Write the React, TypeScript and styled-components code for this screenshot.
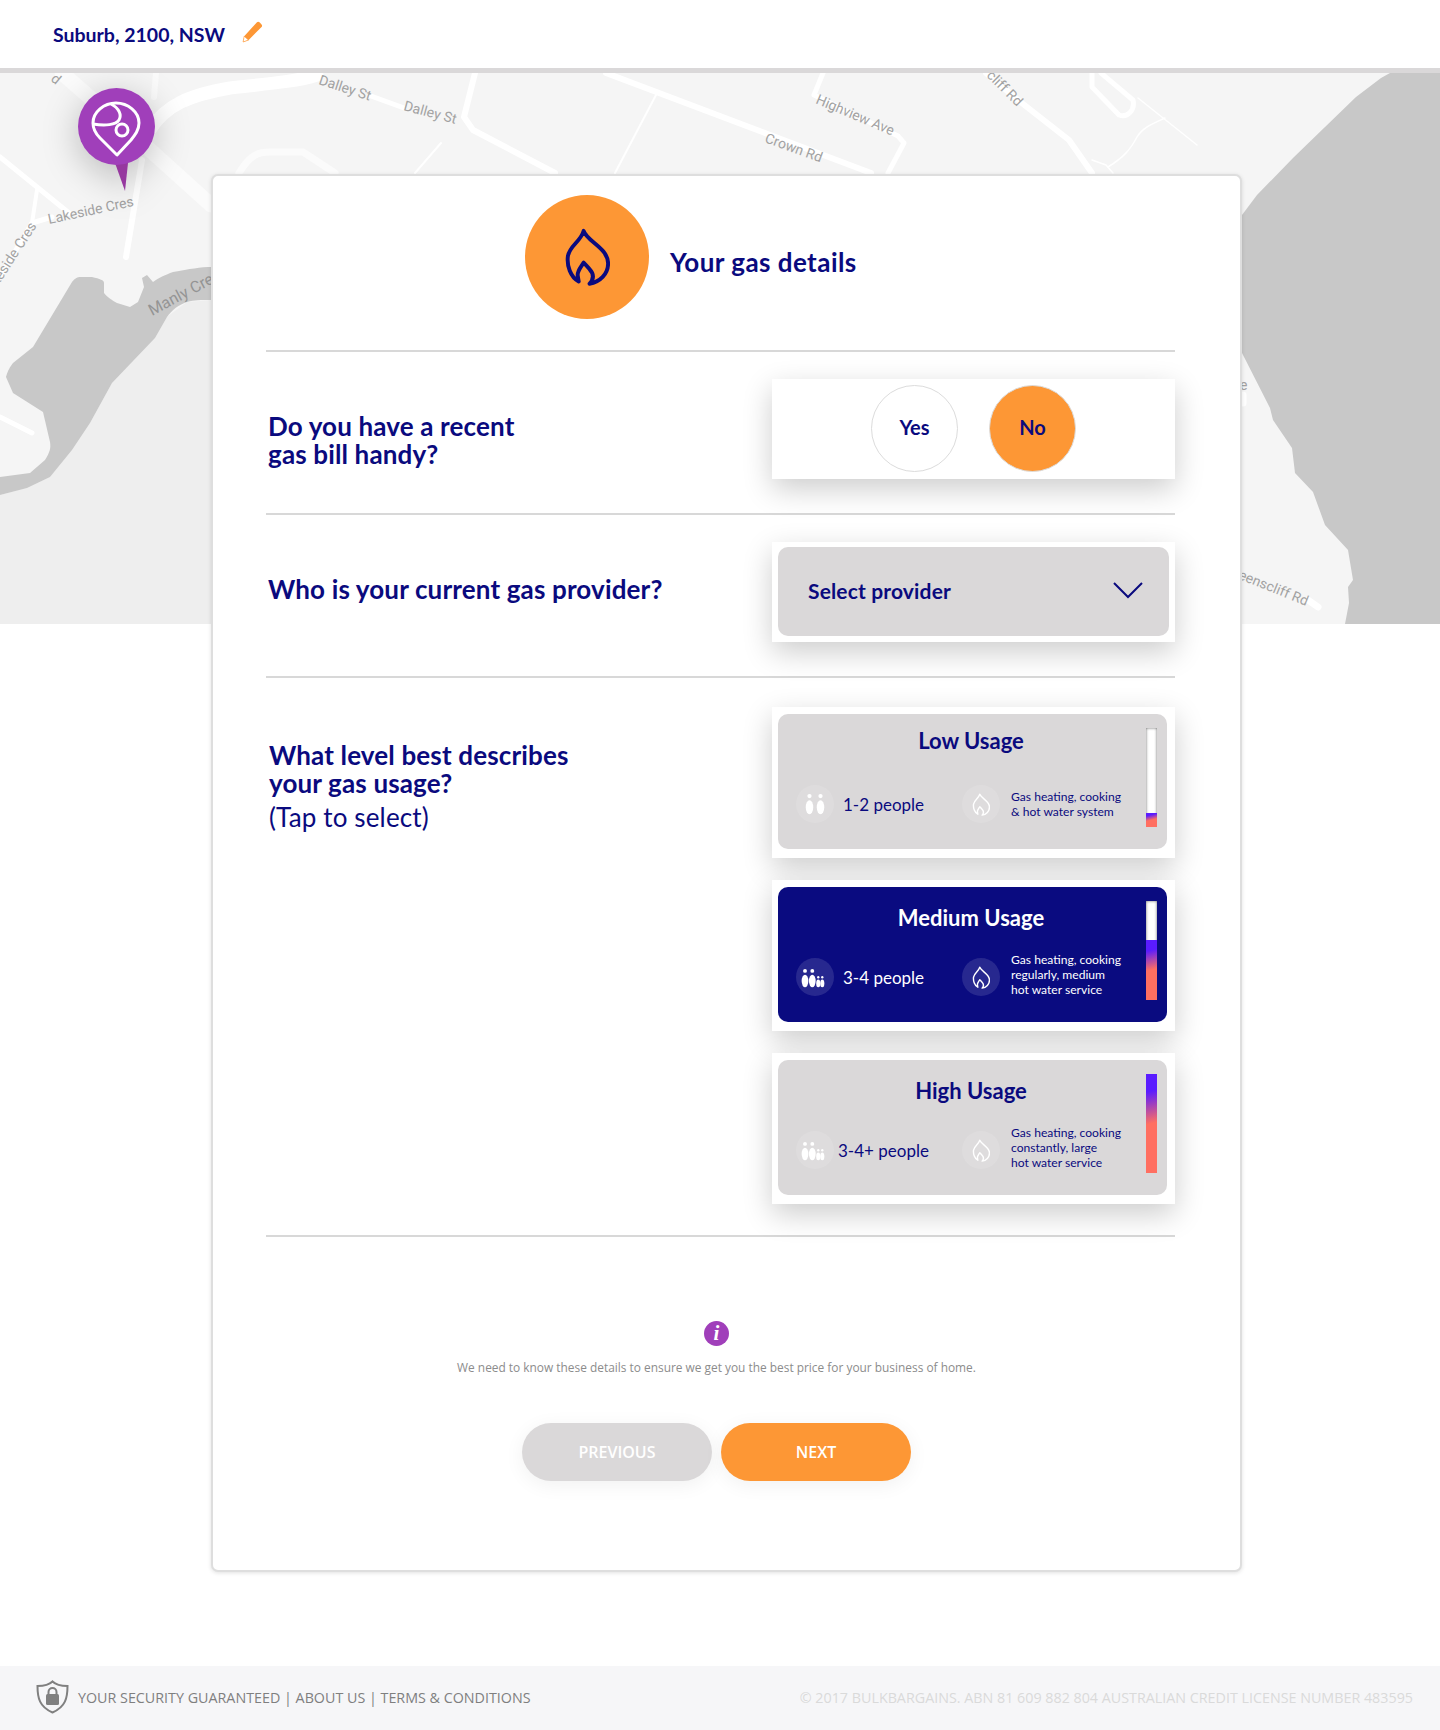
import React from "react";
import styled, { createGlobalStyle } from "styled-components";

const navy = "#0a0a7e";
const orange = "#fd9735";
const grey = "#dad8d9";
const purple = "#a03fba";
const heading = `"Lato", "Noto Sans", sans-serif`;
const body = `"Open Sans", "Noto Sans", sans-serif`;

const GlobalStyle = createGlobalStyle`
  html, body {
    margin: 0;
    padding: 0;
    background: #fff;
    font-family: ${heading};
  }
  * {
    box-sizing: border-box;
  }
`;

const TopBar = styled.header`
  display: flex;
  align-items: center;
  gap: 16px;
  height: 73px;
  padding: 0 0 0 53px;
  background: #fff;
  border-bottom: 5px solid ${grey};
`;

const Place = styled.span`
  font-size: 19.5px;
  font-weight: 700;
  color: ${navy};
`;

const PencilSlot = styled.span`
  display: flex;
  margin-top: -4px;
`;

const MapArea = styled.section`
  position: relative;
  height: 551px;
  overflow: hidden;
  background: #f5f5f5;
`;

const MapDrawing = styled.svg`
  display: block;
  width: 1440px;
  height: 551px;
`;

const MapLabel = styled.text<{ $dark?: boolean }>`
  font-family: "Roboto", sans-serif;
  font-size: ${({ $dark }) => ($dark ? 16 : 14)}px;
  fill: ${({ $dark }) => ($dark ? "#949494" : "#a2a2a2")};
`;

const Pin = styled.svg`
  position: absolute;
  left: 78px;
  top: 15px;
  width: 78px;
  height: 104px;
  filter: drop-shadow(0 8px 18px rgba(0, 0, 0, 0.24));
`;

const Main = styled.main`
  position: relative;
  margin-top: -450px;
  padding: 0 0 94px 211px;
`;

const Card = styled.div`
  width: 1031px;
  height: 1398px;
  padding: 19px 65px 0 53px;
  background: #fff;
  border: 2px solid #dedede;
  border-radius: 7px;
  box-shadow: 0 1px 4px rgba(0, 0, 0, 0.12);
`;

const CardHeading = styled.div`
  display: flex;
  align-items: center;
  gap: 21px;
  height: 155px;
  padding: 0 0 31px 259px;
`;

const HeadingBadge = styled.div`
  display: flex;
  align-items: center;
  justify-content: center;
  width: 124px;
  height: 124px;
  border-radius: 50%;
  background: ${orange};
`;

const HeadingTitle = styled.h1`
  margin: 9px 0 0;
  font-size: 26px;
  letter-spacing: 0.45px;
  font-weight: 700;
  color: ${navy};
`;

const Divider = styled.hr`
  height: 2px;
  margin: 0;
  border: 0;
  background: #d8d8d8;
`;

const Row = styled.div<{ $top?: number; $bottom?: number }>`
  display: flex;
  justify-content: space-between;
  padding: ${({ $top }) => $top ?? 27}px 0 ${({ $bottom }) => $bottom ?? 34}px 2px;
`;

const Question = styled.h2<{ $offset: number; $indent?: number }>`
  margin: ${({ $offset }) => $offset}px 0 0 ${({ $indent }) => $indent ?? 0}px;
  font-size: 26px;
  letter-spacing: 0.15px;
  line-height: 28px;
  font-weight: 700;
  color: ${navy};
`;

const Hint = styled.span`
  display: block;
  margin-top: 6px;
  font-weight: 400;
`;

const AnswerBox = styled.div`
  display: flex;
  align-items: center;
  justify-content: center;
  gap: 31px;
  width: 403px;
  height: 100px;
  background: #fff;
  box-shadow: 0 10px 28px rgba(0, 0, 0, 0.2);
`;

const Choice = styled.div<{ $on?: boolean }>`
  display: flex;
  align-items: center;
  justify-content: center;
  width: 87px;
  height: 87px;
  margin-top: -2px;
  padding-bottom: 3px;
  border-radius: 50%;
  border: 1px solid #dcdcdc;
  background: ${({ $on }) => ($on ? orange : "#fff")};
  font-size: 20px;
  font-weight: 700;
  color: ${navy};
`;

const SelectBox = styled.div`
  width: 403px;
  height: 100px;
  padding: 5px 6px 6px;
  background: #fff;
  box-shadow: 0 10px 28px rgba(0, 0, 0, 0.2);
`;

const SelectInner = styled.div`
  display: flex;
  align-items: center;
  justify-content: space-between;
  height: 89px;
  padding: 0 26px 2px 30px;
  border-radius: 10px;
  background: ${grey};
  font-size: 21px;
  letter-spacing: 0.15px;
  font-weight: 700;
  color: ${navy};
`;

const UsageList = styled.div`
  display: flex;
  flex-direction: column;
  gap: 22px;
`;

const UsageBox = styled.div`
  width: 403px;
  height: 151px;
  padding: 7px 8px 9px 6px;
  background: #fff;
  box-shadow: 0 10px 28px rgba(0, 0, 0, 0.2);
`;

const UsageInner = styled.div<{ $active?: boolean }>`
  display: flex;
  height: 135px;
  padding: 14px 10px 0 18px;
  border-radius: 10px;
  background: ${({ $active }) => ($active ? "#0a0b80" : grey)};
  color: ${({ $active }) => ($active ? "#fff" : navy)};
`;

const UsageMain = styled.div`
  flex: 1;
  min-width: 0;
`;

const UsageTitle = styled.h3<{ $lift?: boolean }>`
  height: 57px;
  margin: 0;
  padding-top: ${({ $lift }) => ($lift ? 0 : 4)}px;
  font-size: 22px;
  line-height: 26px;
  font-weight: 700;
  text-align: center;
`;

const UsageDetails = styled.div`
  display: flex;
  align-items: center;
  height: 38px;
`;

const PeopleGroup = styled.div<{ $gap: number }>`
  display: flex;
  align-items: center;
  gap: ${({ $gap }) => $gap}px;
  width: 166px;
  font-size: 17px;
  white-space: nowrap;
`;

const IconDisc = styled.div`
  flex: none;
  display: flex;
  align-items: center;
  justify-content: center;
  width: 38px;
  height: 38px;
  border-radius: 50%;
  background: rgba(255, 255, 255, 0.12);
`;

const UsageNote = styled.p<{ $raise?: boolean }>`
  margin: ${({ $raise }) => ($raise ? "-6px" : "-1px")} 0 0 11px;
  font-size: 12.1px;
  line-height: 15px;
  white-space: pre-line;
`;

const LevelBar = styled.div`
  flex: none;
  display: flex;
  align-items: flex-end;
  width: 11px;
  height: 99px;
  background: #fff;
  box-shadow: inset 0 0 3px rgba(0, 0, 0, 0.6);
`;

const LevelFill = styled.div`
  width: 100%;
  background: linear-gradient(166deg, #5a1cff 18%, #ff6f61 50%);
`;

const InfoBlock = styled.div`
  display: flex;
  flex-direction: column;
  align-items: center;
  padding: 84px 8px 0 0;
`;

const InfoMark = styled.div`
  display: flex;
  align-items: center;
  justify-content: center;
  width: 25px;
  height: 25px;
  border-radius: 50%;
  background: ${purple};
  font-family: "Liberation Serif", serif;
  font-size: 21px;
  font-weight: 700;
  font-style: italic;
  color: #fff;
`;

const InfoText = styled.p`
  margin: 12px 0 0;
  font-family: ${body};
  font-size: 11.9px;
  line-height: 18px;
  color: #8c8c8c;
`;

const ButtonRow = styled.div`
  display: flex;
  gap: 9px;
  margin-top: 47px;
`;

const NavButton = styled.button<{ $primary?: boolean }>`
  width: 190px;
  height: 58px;
  border: 0;
  border-radius: 29px;
  background: ${({ $primary }) => ($primary ? orange : grey)};
  box-shadow: 0 4px 20px rgba(0, 0, 0, 0.06);
  font-family: ${body};
  font-size: 16px;
  font-weight: 600;
  color: #fff;
`;

const Footer = styled.footer`
  display: flex;
  align-items: center;
  justify-content: space-between;
  height: 64px;
  padding: 0 27px 2px 36px;
  background: #f6f6f8;
  font-family: ${body};
  font-size: 14.3px;
`;

const FooterLinks = styled.div`
  display: flex;
  align-items: center;
  gap: 9px;
  color: #7f7f7f;
`;

const Copyright = styled.div`
  color: #dadada;
`;

const Flame = ({ size, color, width = 10 }: { size: number; color: string; width?: number }) => (
  <svg width={size * 0.8} height={size} viewBox="30 20 142 176" fill="none">
    <path
      d="M75 183C50 170 38 135 42 105 48 72 82 60 90 28 100 60 165 80 165 128 165 160 140 185 108 190 122 175 122 160 108 145 100 135 95 130 90 125 85 135 70 150 72 165 73 172 74 178 75 183z"
      stroke={color}
      strokeWidth={width}
      strokeLinecap="round"
      strokeLinejoin="round"
    />
  </svg>
);

const People = ({ count }: { count: number }) => {
  const figures =
    count === 2
      ? [
          { x: 9.100, s: 1 },
          { x: 20.900, s: 1 },
        ]
      : [
          { x: 4.300, s: 0.9 },
          { x: 12.100, s: 0.9 },
          { x: 18.500, s: 0.55 },
          { x: 22.800, s: 0.55 },
        ];
  return (
    <svg width="28" height="22" viewBox="0 0 30 22" fill="#fff">
      {figures.map(({ x, s }, i) => (
        <g key={i}>
          <circle cx={x} cy={22 - 19.5 * s} r={2.3 * s} />
          <ellipse cx={x} cy={22 - 7.5 * s} rx={4 * s} ry={7.5 * s} />
        </g>
      ))}
    </svg>
  );
};

const Pencil = () => (
  <svg width="22" height="22" viewBox="0 0 20 20">
    <path d="M14.500 1.200c.7-.7 1.700-.6 2.600.2l1.400 1.500c.8.8.9 1.800.2 2.500L7 17.200l-5 1.900.9-5.300z" fill={orange} />
    <path d="M2.900 13.800l3.900 3.500-4.900 1.800z" fill="#fff" stroke={orange} strokeWidth="0.6" />
  </svg>
);

const Chevron = () => (
  <svg width="30" height="17" viewBox="0 0 30 17" fill="none">
    <path d="M1 1l14 14L29 1" stroke={navy} strokeWidth="2" />
  </svg>
);

const Shield = () => (
  <svg width="33" height="34" viewBox="0 0 33 34" fill="none">
    <path
      d="M16.500 1.500c3 3 8 4.500 15 4.500 0 12-2 21-15 26.500C3.500 27 1.500 18 1.500 6c7 0 12-1.500 15-4.500z"
      stroke="#808080"
      strokeWidth="2"
    />
    <path d="M12.500 15v-3a4 4 0 0 1 8 0v3" stroke="#808080" strokeWidth="2" />
    <rect x="10" y="14" width="13" height="11" rx="1.500" fill="#808080" />
  </svg>
);

const roads = [
  { d: "M62 73L150 150 211 205", w: 15, c: "#fbfbfb" },
  { d: "M150 130C165 105 190 95 230 88 265 84 295 82 317 75", w: 13 },
  { d: "M156 73L154 97", w: 6, c: "#fbfbfb" },
  { d: "M142 160L126 257", w: 6 },
  { d: "M0 157L69 213", w: 5 },
  { d: "M37 190L32 223", w: 4 },
  { d: "M32 223L52 217", w: 5 },
  { d: "M32 223L0 277", w: 5 },
  { d: "M0 417L32 433", w: 5 },
  { d: "M371 96L404 108", w: 5 },
  { d: "M475 73L464 117 473 130 555 173", w: 6 },
  { d: "M239 173C250 155 258 152 270 152H303L335 173", w: 7, c: "#fbfbfb" },
  { d: "M441 143L415 173", w: 2 },
  { d: "M606 73L871 173", w: 6 },
  { d: "M656 95L615 173", w: 2 },
  { d: "M823 73L814 95 898 136 904 143 888 173", w: 5 },
  { d: "M986 73L1018 100 1069 140 1092 173", w: 6 },
  { d: "M1092 73V87L1119 115C1128 118 1135 110 1133 100L1101 73", w: 5 },
  { d: "M1138 98L1197 145", w: 1.500 },
  { d: "M1165 118C1150 125 1142 128 1137 137 1130 150 1124 157 1108 167", w: 1.500 },
  { d: "M1092 160L1106 165 1113 173", w: 1.500 },
  { d: "M1308 600L1318 607", w: 7 },
  { d: "M1243 395V403", w: 7 },
];

const labels = [
  { t: "Dalley St", x: 318, y: 84, r: 18 },
  { t: "Dalley St", x: 403, y: 110, r: 15 },
  { t: "Highview Ave", x: 815, y: 103, r: 23 },
  { t: "Crown Rd", x: 764, y: 142, r: 20 },
  { t: "cliff Rd", x: 986, y: 76, r: 45 },
  { t: "Lakeside Cres", x: 49, y: 224, r: -12 },
  { t: "Lakeside Cres", x: 37, y: 226, r: -57, end: true },
  { t: "d", x: 50, y: 80, r: 40 },
  { t: "Queenscliff Rd", x: 1306, y: 606, r: 22, end: true },
  { t: "e", x: 1240, y: 390, r: 0 },
];

const Map = () => (
  <MapArea>
    <MapDrawing viewBox="0 73 1440 551">
      <path d="M212 300L187 302 167 317 155 338 112 383 90 423 72 450 50 477 27 488 0 495V624H212z" fill="#eeeeee" />
      <path
        d="M0 477L30 473 45 460C50 452 51 448 50 442L43 412 13 393 6 377C8 370 10 367 13 363L33 347 72 282C75 278 78 277 80 277H92C100 279 104 280 104 283V293C108 298 112 300 117 303L130 307 138 302 144 287 142 278 147 275 153 282C160 277 165 275 173 272 190 269 200 267 212 267V300C200 300 195 300 187 302 178 305 172 310 167 317L155 338 112 383 90 423 72 450 50 477 27 488 0 495z"
        fill="#c8c8c8"
      />
      <path
        d="M1390 73L1381 78 1356 97 1294 157 1257 195 1242 215V353L1270 408 1273 420 1292 448 1295 473 1313 492 1325 525 1348 550 1353 580 1348 587 1349 603 1345 624H1440V73z"
        fill="#c8c8c8"
      />
      {roads.map(({ d, w, c }, i) => (
        <path key={i} d={d} fill="none" stroke={c ?? "#fff"} strokeWidth={w} strokeLinecap="round" strokeLinejoin="round" />
      ))}
      {labels.map(({ t, x, y, r, end }, i) => (
        <MapLabel key={i} x={x} y={y} textAnchor={end ? "end" : "start"} transform={`rotate(${r} ${x} ${y})`}>
          {t}
        </MapLabel>
      ))}
      <MapLabel $dark x={152} y={316} transform="rotate(-28 152 316)">
        Manly Creek
      </MapLabel>
    </MapDrawing>
    <Pin viewBox="0 0 78 104">
      <polygon points="37,75 50,75 47,103" fill="#96389f" />
      <circle cx="38.500" cy="38.500" r="38.500" fill={purple} />
      <path
        d="M39 67L22 50C16 44 15 39 15 35 15 24 26 15 38 15 50 15 61 24 61 35 61 42 57 47 53 52z"
        fill="none"
        stroke="#fff"
        strokeWidth="3"
        strokeLinejoin="round"
      />
      <path d="M33 16C41 20 44 27 41 32 38 37 27 38 15 36" fill="none" stroke="#fff" strokeWidth="3" />
      <circle cx="44" cy="42" r="6" fill="none" stroke="#fff" strokeWidth="3" />
    </Pin>
  </MapArea>
);

const usages = [
  {
    title: "Low Usage",
    people: "1-2 people",
    count: 2,
    gap: 9,
    note: "Gas heating, cooking\n& hot water system",
    level: 14,
    lift: true,
  },
  {
    title: "Medium Usage",
    people: "3-4 people",
    count: 4,
    gap: 9,
    note: "Gas heating, cooking\nregularly, medium\nhot water service",
    level: 60,
    active: true,
  },
  {
    title: "High Usage",
    people: "3-4+ people",
    count: 4,
    gap: 4,
    note: "Gas heating, cooking\nconstantly, large\nhot water service",
    level: 99,
  },
];

export default function App() {
  return (
    <>
      <GlobalStyle />
      <TopBar>
        <Place>Suburb, 2100, NSW</Place>
        <PencilSlot>
          <Pencil />
        </PencilSlot>
      </TopBar>
      <Map />
      <Main>
        <Card>
          <CardHeading>
            <HeadingBadge>
              <Flame size={58} color={navy} width={12} />
            </HeadingBadge>
            <HeadingTitle>Your gas details</HeadingTitle>
          </CardHeading>
          <Divider />
          <Row>
            <Question $offset={33}>
              Do you have a recent
              <br />
              gas bill handy?
            </Question>
            <AnswerBox>
              <Choice>Yes</Choice>
              <Choice $on>No</Choice>
            </AnswerBox>
          </Row>
          <Divider />
          <Row>
            <Question $offset={33}>Who is your current gas provider?</Question>
            <SelectBox>
              <SelectInner>
                Select provider
                <Chevron />
              </SelectInner>
            </SelectBox>
          </Row>
          <Divider />
          <Row $top={29} $bottom={31}>
            <Question $offset={34} $indent={1}>
              What level best describes
              <br />
              your gas usage?
              <Hint>(Tap to select)</Hint>
            </Question>
            <UsageList>
              {usages.map((u) => (
                <UsageBox key={u.title}>
                  <UsageInner $active={u.active}>
                    <UsageMain>
                      <UsageTitle $lift={u.lift}>{u.title}</UsageTitle>
                      <UsageDetails>
                        <PeopleGroup $gap={u.gap}>
                          <IconDisc>
                            <People count={u.count} />
                          </IconDisc>
                          {u.people}
                        </PeopleGroup>
                        <IconDisc>
                          <Flame size={23} color="#fff" width={11} />
                        </IconDisc>
                        <UsageNote $raise={!u.lift}>{u.note}</UsageNote>
                      </UsageDetails>
                    </UsageMain>
                    <LevelBar>
                      <LevelFill style={{ height: u.level }} />
                    </LevelBar>
                  </UsageInner>
                </UsageBox>
              ))}
            </UsageList>
          </Row>
          <Divider />
          <InfoBlock>
            <InfoMark>i</InfoMark>
            <InfoText>We need to know these details to ensure we get you the best price for your business of home.</InfoText>
            <ButtonRow>
              <NavButton>PREVIOUS</NavButton>
              <NavButton $primary>NEXT</NavButton>
            </ButtonRow>
          </InfoBlock>
        </Card>
      </Main>
      <Footer>
        <FooterLinks>
          <Shield />
          <span>YOUR SECURITY GUARANTEED | ABOUT US | TERMS &amp; CONDITIONS</span>
        </FooterLinks>
        <Copyright>© 2017 BULKBARGAINS. ABN 81 609 882 804 AUSTRALIAN CREDIT LICENSE NUMBER 483595</Copyright>
      </Footer>
    </>
  );
}
